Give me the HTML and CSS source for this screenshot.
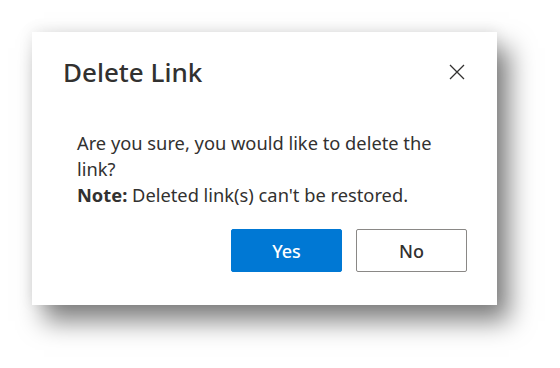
FILE: index.html
```html
<!doctype html>
<html lang="en">
<head>
  <meta charset="utf-8">
  <title>Delete Link</title>
  <link rel="stylesheet" href="styles.css">
</head>
<body>
  <div class="dialog">
    <div class="dialog-header">
      <h2 class="dialog-title">Delete Link</h2>
      <button type="button" class="close-button" aria-label="Close">
        <svg width="16" height="16" viewBox="0 0 16 16">
          <path d="M1 1 L15 15 M15 1 L1 15" stroke="#323130" stroke-width="1.3" fill="none"/>
        </svg>
      </button>
    </div>

    <div class="dialog-body">
      <p>Are you sure, you would like to delete the link?</p>
      <p><b>Note:</b> Deleted link(s) can't be restored.</p>
    </div>

    <div class="dialog-footer">
      <button type="button" class="btn btn-primary">Yes</button>
      <button type="button" class="btn btn-default">No</button>
    </div>
  </div>
</body>
</html>
```

FILE: styles.css
```css
html, body {
  height: 100%;
}

body {
  margin: 0;
  padding: 32px 0 0 32px;
  box-sizing: border-box;
  background-color: #ffffff;
  font-family: 'Noto Sans', 'Open Sans', sans-serif;
  color: #323130;
}

.dialog {
  width: 465px;
  height: 273px;
  box-sizing: border-box;
  background-color: #ffffff;
  box-shadow: 12px 16px 24px rgba(0, 0, 0, 0.5), 0 -2px 14px rgba(0, 0, 0, 0.08);
  padding: 22px 31px 0 31px;
}

.dialog-header {
  display: flex;
  justify-content: space-between;
  align-items: center;
}

.dialog-title {
  margin: 0;
  font-size: 26px;
  font-weight: 500;
  line-height: 36px;
}

.close-button {
  background: none;
  border: none;
  padding: 0;
  margin-right: 1px;
  width: 16px;
  height: 16px;
  cursor: pointer;
}

.dialog-body {
  padding: 40px 0 0 14px;
  font-size: 18.3px;
  line-height: 26px;
}

.dialog-body p {
  margin: 0;
  width: 365px;
}

.dialog-footer {
  display: flex;
  justify-content: flex-end;
  gap: 14px;
  margin-top: 21px;
  margin-right: -1px;
}

.btn {
  width: 111px;
  height: 43px;
  border-radius: 2px;
  font-family: 'Noto Sans', 'Open Sans', sans-serif;
  font-size: 18px;
  font-weight: 500;
  cursor: pointer;
}

.btn-primary {
  background-color: #0078d4;
  border: 1px solid #0078d4;
  color: #ffffff;
}

.btn-default {
  background-color: #ffffff;
  border: 1px solid #8a8886;
  color: #323130;
}
```
